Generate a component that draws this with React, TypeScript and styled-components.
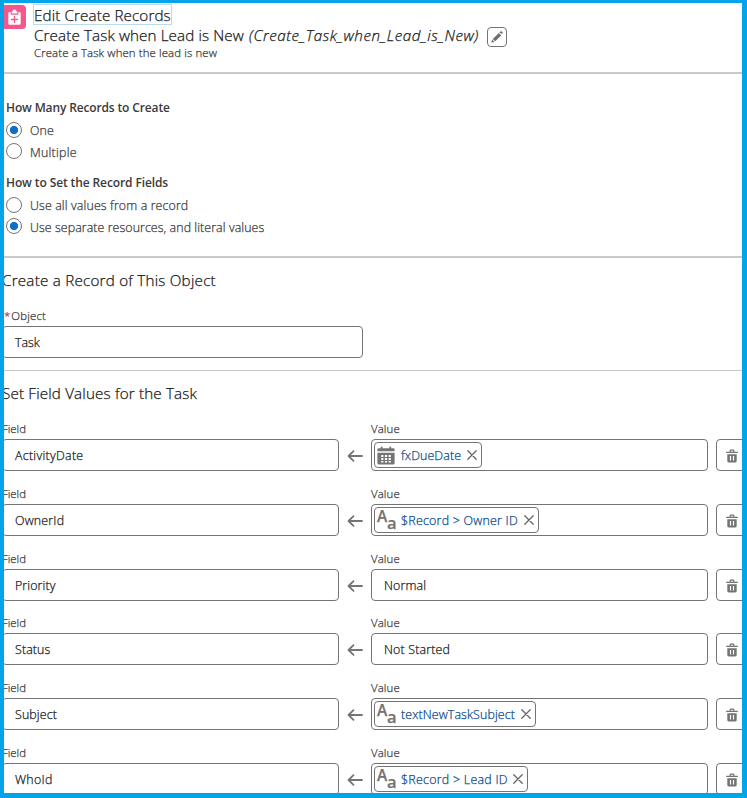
import React from 'react';
import styled, { createGlobalStyle } from 'styled-components';

const GlobalStyle = createGlobalStyle`
  * { box-sizing: border-box; }
  body { margin: 0; background: #fff; }
`;

const Frame = styled.main`
  width: 747px;
  height: 798px;
  border: solid #03a4ea;
  border-width: 3px 5px 5px 4px;
  overflow: hidden;
  background: #fff;
  color: #181818;
  font-family: 'Open Sans', 'Noto Sans', sans-serif;
  font-size: 12.4px;
  font-weight: 300;
  -webkit-text-stroke: 0.25px;
  white-space: nowrap;
`;

const Tracked = styled.span<{ $track?: number }>`
  letter-spacing: ${p => p.$track ?? 0.12}px;
`;

const Header = styled.header`
  display: flex;
  height: 71px;
  border-bottom: 2px solid #c9c9c9;
`;

const RecordIcon = styled.div`
  display: flex;
  align-items: center;
  justify-content: center;
  width: 24px;
  height: 24px;
  margin: 2px 7px 0 -2px;
  border-radius: 4px;
  background: #f4578d;
`;

const Titles = styled.div`
  display: flex;
  flex-direction: column;
  align-items: flex-start;
`;

const PageTitle = styled.h1`
  margin: 1px 0 0;
  height: 21px;
  width: 139px;
  padding-left: 0;
  border: 1px solid #b9dcf0;
  font-size: 15.2px;
  font-weight: inherit;
  line-height: 20px;
`;

const NameLine = styled.div`
  display: flex;
  align-items: center;
  height: 20px;
  padding-left: 1px;
  font-size: 15.2px;
  line-height: 20px;
`;

const FlowName = styled.em`
  margin-left: 5px;
  letter-spacing: 0.52px;
`;

const EditButton = styled.button`
  display: flex;
  align-items: center;
  justify-content: center;
  width: 20px;
  height: 20px;
  margin: 4px 0 0 8px;
  padding: 0;
  border: 1px solid #747474;
  border-radius: 4px;
  background: #fff;
`;

const Description = styled.p`
  margin: 0 0 0 1px;
  font-size: 11.4px;
  line-height: 16px;
  color: #3a3a3a;
`;

const Choices = styled.section`
  height: 184px;
  padding: 25px 0 0 2px;
  border-bottom: 2px solid #c9c9c9;
  color: #3a3a3a;
`;

const Group = styled.fieldset`
  display: flex;
  flex-direction: column;
  height: 75px;
  margin: 0;
  padding: 0;
  border: 0;
`;

const GroupTitle = styled.div`
  height: 22px;
  font-size: 12px;
  font-weight: 600;
  -webkit-text-stroke: 0;
  line-height: 18px;
  color: #3a3a3a;
`;

const RadioRow = styled.label`
  display: flex;
  height: 22px;
  line-height: 19px;
`;

const Radio = styled.span<{ $on?: boolean; $drop?: number }>`
  width: 16px;
  height: 16px;
  margin: ${p => p.$drop ?? 1}px 8px 0 0;
  border: 1px solid #747474;
  border-radius: 50%;
  background: ${p => (p.$on ? 'radial-gradient(circle, #0b70ca 0 3.7px, #fff 4.5px)' : '#fff')};
`;

const ObjectSection = styled.section`
  height: 113px;
  margin-left: -2px;
  padding-top: 12px;
  border-bottom: 1px solid #c9c9c9;
`;

const Heading = styled.h2`
  margin: 0;
  height: 22px;
  font-size: 15.2px;
  font-weight: inherit;
  line-height: 20px;
`;

const Label = styled.div`
  height: 20px;
  font-size: 11.4px;
  line-height: 20px;
  color: #3a3a3a;
`;

const ObjectLabel = styled(Label)`
  display: flex;
  gap: 1px;
  margin-top: 14px;
  padding-left: 2px;
`;

const Required = styled.abbr`
  color: #b03a3a;
`;

const Input = styled.div<{ $width?: number; $pill?: boolean }>`
  display: flex;
  align-items: center;
  width: ${p => p.$width ?? 337}px;
  height: 32px;
  padding-left: ${p => (p.$pill ? 2 : 12)}px;
  border: 1px solid #747474;
  border-radius: 4px;
  background: #fff;
`;

const FieldSection = styled.section`
  margin-left: -2px;
  padding-top: 12px;
`;

const Rows = styled.div`
  margin-top: 14px;
`;

const FieldRow = styled.div`
  display: grid;
  grid-template-columns: 337px 32px 337px 32px;
  grid-template-rows: 20px 32px;
  height: 65px;

  &:nth-child(3) {
    height: 64px;
  }
`;

const ValueLabel = styled(Label)`
  grid-column: 3 / span 2;
`;

const FieldLabel = styled(Label)`
  grid-column: 1 / span 2;
`;

const ArrowCell = styled.div`
  display: flex;
  align-items: center;
  justify-content: center;
  padding-top: 2px;
`;

const DeleteButton = styled.button`
  display: flex;
  align-items: center;
  justify-content: center;
  width: 32px;
  height: 32px;
  margin-left: 8px;
  padding: 1px 0 0;
  border: 1px solid #747474;
  border-radius: 4px;
  background: #fff;
`;

const Pill = styled.span<{ $width: number }>`
  display: flex;
  align-items: center;
  justify-content: space-between;
  width: ${p => p.$width}px;
  height: 26px;
  padding: 0 4px 0 2px;
  border: 1px solid #747474;
  border-radius: 4px;
  color: #0b4a8c;
`;

const PillBody = styled.span`
  display: flex;
  align-items: center;
  gap: 6px;
`;

const ArrowLeft = () => (
  <svg width="16" height="14" viewBox="0 0 16 14" fill="none" stroke="#747474" strokeWidth="1.8" strokeLinecap="round" strokeLinejoin="round">
    <path d="M15 7H1.5M6.500 2.200 1.500 7 6.500 11.800" />
  </svg>
);

const Close = () => (
  <svg width="10" height="10" viewBox="0 0 10 10" fill="none" stroke="#666" strokeWidth="1.3" strokeLinecap="round">
    <path d="m.8.8 8.4 8.4M9.2.8.8 9.2" />
  </svg>
);

const Trash = () => (
  <svg width="12" height="14" viewBox="0 0 12 14" fill="#747474">
    <path d="M.6 2.7h3V1.8C3.6.9 4.2.4 5 .4h2c.8 0 1.4.5 1.4 1.4v.9h3c.7 0 .7 1.4 0 1.4H.6c-.7 0-.7-1.4 0-1.4Zm4.2 0h2.4v-.9H4.8v.9Z" />
    <path fillRule="evenodd" d="M1.3 5.2h9.4v6.9c0 .8-.6 1.4-1.4 1.4H2.7c-.8 0-1.4-.6-1.4-1.4V5.2Zm2.6 1.7v4.5h1.2V6.9H3.9Zm3 0v4.5h1.2V6.9H6.9Z" />
  </svg>
);

const Pencil = () => (
  <svg width="12" height="12" viewBox="0 0 12 12" fill="#706e6b">
    <path d="m9.200.8.5-.4c.5-.300.9-.1 1.200.2l.5.5c.4.4.4.9 0 1.300l-.5.5L8.500 1.500l.7-.7ZM7.900 2.100l2.300 2.300-6 5.900-2.400-2.400 6.100-5.800ZM1.200 8.600l2.300 2.300-2.800.7c-.3.1-.5-.1-.4-.4l.9-2.600Z" />
  </svg>
);

const Clipboard = () => (
  <svg width="15" height="17" viewBox="0 0 16 18">
    <path fill="#fff" d="M5 2.600h.8C5.900 1.300 6.700.5 8 .5s2.100.8 2.200 2.100h.8v2.200H5V2.600Z" />
    <path fill="#fff" d="M2.800 3.200h1v1.700c0 .7.4 1.100 1.100 1.100h6.200c.7 0 1.100-.4 1.100-1.100V3.200h1c.8 0 1.400.6 1.400 1.400v10.800c0 .8-.6 1.400-1.400 1.400H2.800c-.8 0-1.400-.6-1.400-1.400V4.600c0-.8.6-1.400 1.400-1.400Z" />
    <path d="M8 7.900v6.400M4.800 11.100h6.400" stroke="#f4578d" strokeWidth="1.400" strokeLinecap="round" />
  </svg>
);

const Calendar = () => (
  <svg width="18" height="19" viewBox="0 0 18 19">
    <path fill="#747474" d="M1.700 2.200h2.100V1.100C3.800.2 5.600.2 5.600 1.100v1.100h6.800V1.100c0-.9 1.800-.9 1.800 0v1.100h2.100c.8 0 1.300.5 1.300 1.300v1.700H.4V3.500c0-.8.5-1.300 1.300-1.300ZM.4 6.700h17.200v10.300c0 .8-.6 1.400-1.400 1.400H1.800c-.8 0-1.400-.6-1.400-1.400V6.700Z" />
    <path fill="#fff" d="M4.200 9h2.200v2H4.200zM7.900 9h2.200v2H7.900zM11.600 9h2.200v2h-2.200zM4.200 12.100h2.200v2H4.200zM7.900 12.100h2.200v2H7.900zM11.600 12.100h2.200v2h-2.200zM4.200 15.100h2.200v1.300H4.200zM7.900 15.100h2.200v1.300H7.900zM11.600 15.100h2.200v1.300h-2.200z" />
  </svg>
);

const TextType = styled.span`
  display: flex;
  width: 18px;
  height: 20px;
  color: #747474;
  font-weight: 600;
  line-height: 1;
`;

const BigLetter = styled.span`
  width: 10px;
  font-size: 15.5px;
  line-height: 12px;
`;

const SmallLetter = styled.span`
  font-size: 16.5px;
  line-height: 26px;
`;

const TextIcon = () => (
  <TextType>
    <BigLetter>A</BigLetter>
    <SmallLetter>a</SmallLetter>
  </TextType>
);

interface FieldData {
  field: string;
  value: string;
  fieldTrack?: number;
  track?: number;
  pill?: { width: number; icon: 'date' | 'text' };
}

const fields: FieldData[] = [
  { field: 'ActivityDate', value: 'fxDueDate', fieldTrack: 0.3, pill: { width: 108, icon: 'date' } },
  { field: 'OwnerId', value: '$Record > Owner ID', fieldTrack: 0.2, track: 0.24, pill: { width: 165, icon: 'text' } },
  { field: 'Priority', value: 'Normal' },
  { field: 'Status', value: 'Not Started', track: 0.17 },
  { field: 'Subject', value: 'textNewTaskSubject', pill: { width: 162, icon: 'text' } },
  { field: 'WhoId', value: '$Record > Lead ID', fieldTrack: 0.3, track: 0.27, pill: { width: 154, icon: 'text' } },
];

const FieldAssignment = ({ field, value, fieldTrack, track, pill }: FieldData) => (
  <FieldRow>
    <FieldLabel><Tracked $track={0}>Field</Tracked></FieldLabel>
    <ValueLabel><Tracked>Value</Tracked></ValueLabel>
    <Input><Tracked $track={fieldTrack}>{field}</Tracked></Input>
    <ArrowCell><ArrowLeft /></ArrowCell>
    <Input $pill={!!pill}>
      {pill ? (
        <Pill $width={pill.width}>
          <PillBody>
            {pill.icon === 'date' ? <Calendar /> : <TextIcon />}
            <Tracked $track={track}>{value}</Tracked>
          </PillBody>
          <Close />
        </Pill>
      ) : (
        <Tracked $track={track}>{value}</Tracked>
      )}
    </Input>
    <DeleteButton aria-label="Delete"><Trash /></DeleteButton>
  </FieldRow>
);

export default function App() {
  return (
    <Frame>
      <GlobalStyle />
      <Header>
        <RecordIcon><Clipboard /></RecordIcon>
        <Titles>
          <PageTitle><Tracked>Edit Create Records</Tracked></PageTitle>
          <NameLine>
            <Tracked>Create Task when Lead is New</Tracked>
            <FlowName>(Create_Task_when_Lead_is_New)</FlowName>
            <EditButton aria-label="Edit"><Pencil /></EditButton>
          </NameLine>
          <Description><Tracked>Create a Task when the lead is new</Tracked></Description>
        </Titles>
      </Header>
      <Choices>
        <Group>
          <GroupTitle><Tracked $track={-0.14}>How Many Records to Create</Tracked></GroupTitle>
          <RadioRow><Radio $on /><Tracked>One</Tracked></RadioRow>
          <RadioRow><Radio $drop={0} /><Tracked $track={0.25}>Multiple</Tracked></RadioRow>
        </Group>
        <Group>
          <GroupTitle><Tracked $track={-0.11}>How to Set the Record Fields</Tracked></GroupTitle>
          <RadioRow><Radio /><Tracked>Use all values from a record</Tracked></RadioRow>
          <RadioRow><Radio $on $drop={0} /><Tracked $track={0.07}>Use separate resources, and literal values</Tracked></RadioRow>
        </Group>
      </Choices>
      <ObjectSection>
        <Heading><Tracked $track={0.23}>Create a Record of This Object</Tracked></Heading>
        <ObjectLabel><Required>*</Required><Tracked $track={0.2}>Object</Tracked></ObjectLabel>
        <Input $width={361}><Tracked $track={0}>Task</Tracked></Input>
      </ObjectSection>
      <FieldSection>
        <Heading><Tracked $track={0.17}>Set Field Values for the Task</Tracked></Heading>
        <Rows>
          {fields.map(f => <FieldAssignment key={f.field} {...f} />)}
        </Rows>
      </FieldSection>
    </Frame>
  );
}
